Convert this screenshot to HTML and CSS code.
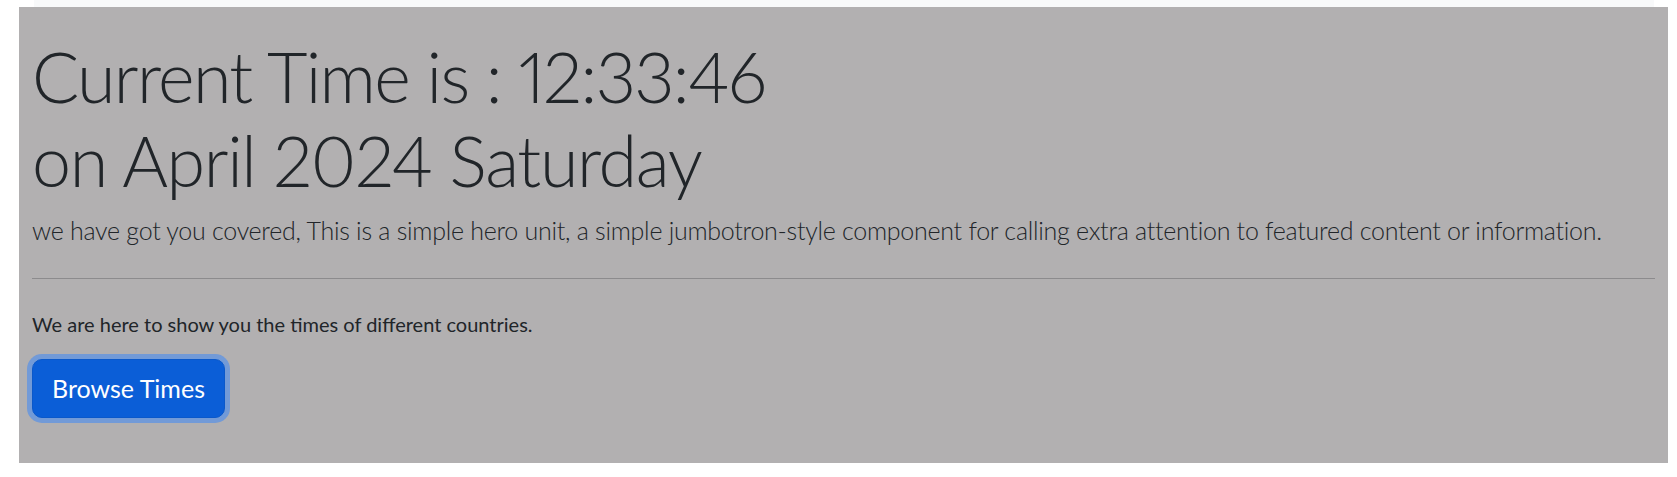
FILE: index.html
```html
<!DOCTYPE html>
<html lang="en">
<head>
<meta charset="utf-8">
<title>Current Time</title>
<link rel="stylesheet" href="styles.css">
</head>
<body>
<div class="nav-strip"></div>
<main class="hero">
  <h1 class="display"><span class="line line-time">Current Time is : 12:33:46</span><span class="line line-date">on April 2024 Saturday</span></h1>
  <p class="lead">we have got you covered, This is a simple hero unit, a simple jumbotron-style component for calling extra attention to featured content or information.</p>
  <hr class="rule">
  <p class="note">We are here to show you the times of different countries.</p>
  <button class="btn" type="button">Browse Times</button>
</main>
</body>
</html>
```

FILE: styles.css
```css
html, body {
  margin: 0;
  padding: 0;
  background: #ffffff;
}

body {
  font-family: "Lato", "Open Sans", sans-serif;
  color: #212529;
}

.nav-strip {
  height: 7px;
  margin: 0 23px 0 34px;
  background: #f8f9fa;
}

.hero {
  display: block;
  margin: 0 9px 14px 19px;
  padding: 27px 13px 45px 13px;
  background: #b2b0b1;
}

.display {
  margin: 0 0 10px 0;
  font-size: 70px;
  line-height: 84px;
  font-weight: 300;
  font-variant-numeric: proportional-nums;
}

.line {
  display: block;
}

.line-time {
  letter-spacing: -1.65px;
}

.line-date {
  letter-spacing: -1.35px;
}

.lead {
  margin: 0 0 28px 0;
  font-size: 25px;
  line-height: 37.5px;
  font-weight: 300;
  letter-spacing: -0.27px;
}

.rule {
  margin: 0 0 30px 0;
  border: 0;
  border-top: 1px solid #8c8b8d;
  height: 0;
}

.note {
  margin: 0 0 20px 0;
  font-size: 20px;
  line-height: 30px;
  font-weight: 400;
}

.btn {
  display: block;
  font-family: inherit;
  font-size: 25px;
  line-height: 37.5px;
  font-weight: 400;
  color: #ffffff;
  background: #0b5ed7;
  border: 1px solid #0a58ca;
  border-radius: 10px;
  padding: 10px 19px;
  box-shadow: 0 0 0 5px rgba(49, 132, 253, 0.5);
  cursor: pointer;
}
```
